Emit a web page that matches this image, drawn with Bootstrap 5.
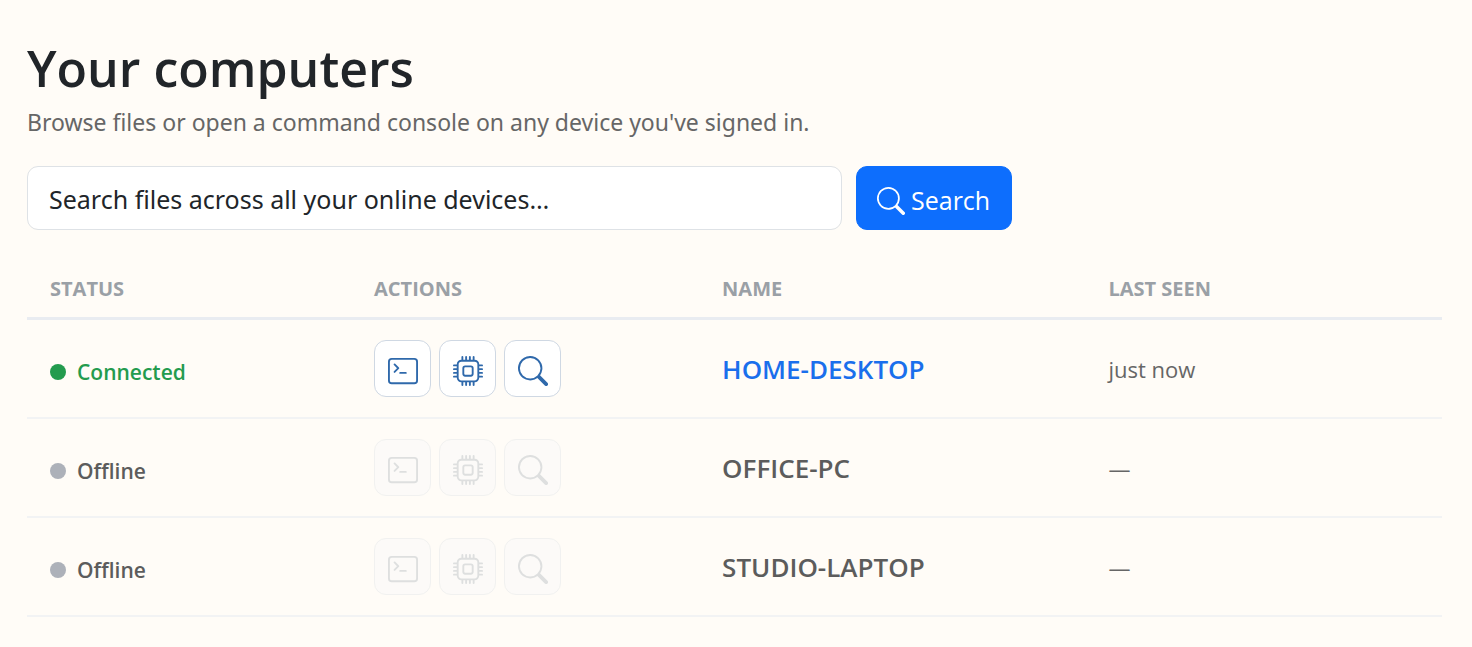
<!DOCTYPE html>
<html lang="en">
<head>
<meta charset="utf-8">
<meta name="viewport" content="width=device-width, initial-scale=1">
<title>Your computers</title>
<link href="https://cdn.jsdelivr.net/npm/bootstrap@5.3.0/dist/css/bootstrap.min.css" rel="stylesheet">
<style>
  body { background: #fffcf7; font-family: "Segoe UI", "Open Sans", "Noto Sans", sans-serif; font-size: 24px; }
  .page { padding: 38px 30px 24px 27px; }
  .page-title { font-size: 50px; line-height: 60px; font-weight: 600; color: #212529; }
  .page-lead { font-family: "Segoe UI", "Noto Sans", sans-serif; font-size: 23px; line-height: 32px; color: #666; margin: 8px 0 28px; }
  .search-row { gap: 14px; margin-bottom: 39px; }
  .search-box { flex: 0 1 815px; height: 64px; font-family: "Segoe UI", "Noto Sans", sans-serif; font-size: 25px; padding: 2px 21px 0; border-radius: 11px; border-color: #dee2e6; color: #212529; }
  .search-box::placeholder { color: #212529; opacity: 1; }
  .search-btn { height: 64px; font-size: 25px; padding: 5px 21px 0 20px; gap: 6px; border-radius: 11px; }
  .device-table { --bs-table-bg: transparent; table-layout: fixed; }
  .device-table th { font-size: 20px; line-height: 24px; font-weight: 700; color: #9aa0a6; padding: 8px 23px 16px; border-bottom: 3px solid #e9ecf1; }
  .device-table td { height: 99px; padding: 0 23px; border-bottom: 2px solid #f2f3f4; }
  .col-status { width: 22.9%; }
  .col-actions { width: 24.6%; }
  .col-name { width: 27.3%; }
  .state { gap: 11px; padding-top: 8px; font-size: 21px; line-height: 32px; font-weight: 600; color: #5c5c5c; }
  .state-dot { width: 16px; height: 16px; background: #adb1b9; }
  .state.online { color: #239b4e; }
  .online .state-dot { background: #239b4e; }
  .actions { gap: 8px; }
  .icon-btn { width: 57px; height: 57px; padding: 5px 0 0; border-radius: 12px; --bs-btn-bg: #fff; --bs-btn-color: #2f69ab; --bs-btn-border-color: #cfd8e3; --bs-btn-disabled-bg: #f8f9fa; --bs-btn-disabled-color: #adb5bd; --bs-btn-disabled-border-color: #dee2e6; --bs-btn-disabled-opacity: .4; }
  .device-name { display: block; padding-top: 3px; font-size: 26px; font-weight: 600; color: #5c5c5c; }
  a.device-name { color: #1a6fec; }
  .device-table .seen { font-size: 22px; color: #666; padding-top: 3px; }
</style>
</head>
<body>
<svg class="d-none" xmlns="http://www.w3.org/2000/svg">
  <symbol id="i-search" viewBox="0 0 16 16"><path d="M11.742 10.344a6.500 6.500 0 1 0-1.397 1.398h-.001c.03.04.062.078.098.115l3.850 3.850a1 1 0 0 0 1.415-1.414l-3.850-3.850a1.007 1.007 0 0 0-.115-.1zM12 6.500a5.500 5.500 0 1 1-11 0 5.500 5.500 0 0 1 11 0z"/></symbol>
  <symbol id="i-terminal" viewBox="0 0 16 16"><path d="M6 9a.5.5 0 0 1 .5-.5h3a.5.5 0 0 1 0 1h-3A.5.5 0 0 1 6 9zM3.854 4.146a.5.5 0 1 0-.708.708L4.793 6.500 3.146 8.146a.5.5 0 1 0 .708.708l2-2a.5.5 0 0 0 0-.708l-2-2z"/><path d="M2 1a2 2 0 0 0-2 2v10a2 2 0 0 0 2 2h12a2 2 0 0 0 2-2V3a2 2 0 0 0-2-2H2zm12 1a1 1 0 0 1 1 1v10a1 1 0 0 1-1 1H2a1 1 0 0 1-1-1V3a1 1 0 0 1 1-1h12z"/></symbol>
  <symbol id="i-cpu" viewBox="0 0 16 16"><path d="M5 0a.5.5 0 0 1 .5.5V2h1V.5a.5.5 0 0 1 1 0V2h1V.5a.5.5 0 0 1 1 0V2h1V.5a.5.5 0 0 1 1 0V2A2.500 2.500 0 0 1 14 4.500h1.500a.5.5 0 0 1 0 1H14v1h1.500a.5.5 0 0 1 0 1H14v1h1.500a.5.5 0 0 1 0 1H14v1h1.500a.5.5 0 0 1 0 1H14a2.500 2.500 0 0 1-2.500 2.500v1.500a.5.5 0 0 1-1 0V14h-1v1.500a.5.5 0 0 1-1 0V14h-1v1.500a.5.5 0 0 1-1 0V14h-1v1.500a.5.5 0 0 1-1 0V14A2.500 2.500 0 0 1 2 11.500H.5a.5.5 0 0 1 0-1H2v-1H.5a.5.5 0 0 1 0-1H2v-1H.5a.5.5 0 0 1 0-1H2v-1H.5a.5.5 0 0 1 0-1H2A2.500 2.500 0 0 1 4.500 2V.5A.5.5 0 0 1 5 0zm-.5 3A1.500 1.500 0 0 0 3 4.500v7A1.500 1.500 0 0 0 4.500 13h7a1.500 1.500 0 0 0 1.500-1.500v-7A1.500 1.500 0 0 0 11.500 3h-7zM5 6.500A1.500 1.500 0 0 1 6.500 5h3A1.500 1.500 0 0 1 11 6.500v3A1.500 1.500 0 0 1 9.500 11h-3A1.500 1.500 0 0 1 5 9.500v-3zM6.500 6a.5.5 0 0 0-.5.5v3a.5.5 0 0 0 .5.5h3a.5.5 0 0 0 .5-.5v-3a.5.5 0 0 0-.5-.5h-3z"/></symbol>
</svg>
<main class="container-fluid page">
  <h1 class="page-title mb-0">Your computers</h1>
  <p class="page-lead">Browse files or open a command console on any device you've signed in.</p>
  <form class="search-row d-flex" role="search">
    <input type="search" class="form-control search-box" aria-label="Search files" placeholder="Search files across all your online devices…">
    <button type="submit" class="btn btn-primary search-btn d-inline-flex align-items-center"><svg width="28" height="28" fill="currentColor" aria-hidden="true"><use href="#i-search"/></svg>Search</button>
  </form>
  <table class="table device-table align-middle mb-0">
    <thead>
      <tr><th scope="col" class="col-status">STATUS</th><th scope="col" class="col-actions">ACTIONS</th><th scope="col" class="col-name">NAME</th><th scope="col">LAST SEEN</th></tr>
    </thead>
    <tbody>
      <tr>
        <td><span class="state online d-flex align-items-center"><span class="state-dot rounded-circle"></span>Connected</span></td>
        <td><div class="actions d-flex">
          <button type="button" class="btn icon-btn d-flex align-items-center justify-content-center" aria-label="Open console"><svg width="30" height="30" fill="currentColor"><use href="#i-terminal"/></svg></button>
          <button type="button" class="btn icon-btn d-flex align-items-center justify-content-center" aria-label="Processes"><svg width="30" height="30" fill="currentColor"><use href="#i-cpu"/></svg></button>
          <button type="button" class="btn icon-btn d-flex align-items-center justify-content-center" aria-label="Search device"><svg width="30" height="30" fill="currentColor"><use href="#i-search"/></svg></button>
        </div></td>
        <td><a href="#" class="device-name text-decoration-none">HOME-DESKTOP</a></td>
        <td class="seen">just now</td>
      </tr>
      <tr>
        <td><span class="state d-flex align-items-center"><span class="state-dot rounded-circle"></span>Offline</span></td>
        <td><div class="actions d-flex">
          <button type="button" disabled class="btn icon-btn d-flex align-items-center justify-content-center" aria-label="Open console"><svg width="30" height="30" fill="currentColor"><use href="#i-terminal"/></svg></button>
          <button type="button" disabled class="btn icon-btn d-flex align-items-center justify-content-center" aria-label="Processes"><svg width="30" height="30" fill="currentColor"><use href="#i-cpu"/></svg></button>
          <button type="button" disabled class="btn icon-btn d-flex align-items-center justify-content-center" aria-label="Search device"><svg width="30" height="30" fill="currentColor"><use href="#i-search"/></svg></button>
        </div></td>
        <td><span class="device-name">OFFICE-PC</span></td>
        <td class="seen">—</td>
      </tr>
      <tr>
        <td><span class="state d-flex align-items-center"><span class="state-dot rounded-circle"></span>Offline</span></td>
        <td><div class="actions d-flex">
          <button type="button" disabled class="btn icon-btn d-flex align-items-center justify-content-center" aria-label="Open console"><svg width="30" height="30" fill="currentColor"><use href="#i-terminal"/></svg></button>
          <button type="button" disabled class="btn icon-btn d-flex align-items-center justify-content-center" aria-label="Processes"><svg width="30" height="30" fill="currentColor"><use href="#i-cpu"/></svg></button>
          <button type="button" disabled class="btn icon-btn d-flex align-items-center justify-content-center" aria-label="Search device"><svg width="30" height="30" fill="currentColor"><use href="#i-search"/></svg></button>
        </div></td>
        <td><span class="device-name">STUDIO-LAPTOP</span></td>
        <td class="seen">—</td>
      </tr>
    </tbody>
  </table>
</main>
<script src="https://cdn.jsdelivr.net/npm/bootstrap@5.3.0/dist/js/bootstrap.bundle.min.js"></script>
</body>
</html>
